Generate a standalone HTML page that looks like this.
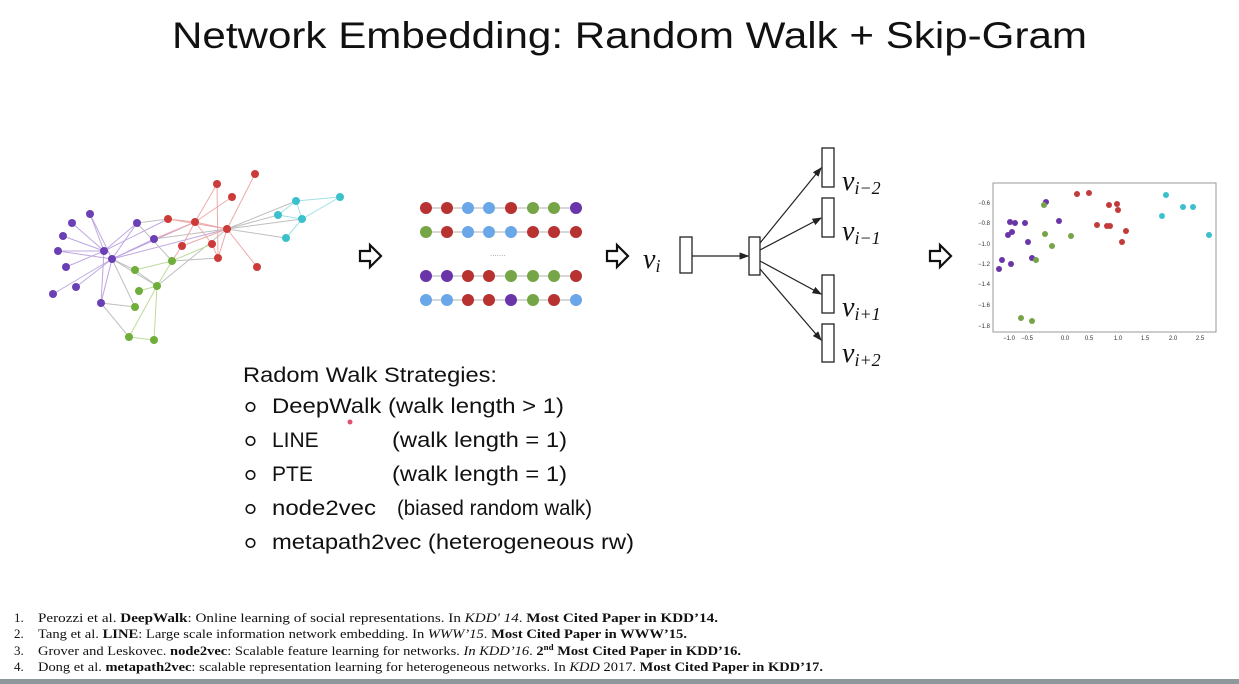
<!DOCTYPE html>
<html><head><meta charset="utf-8"><style>
html,body{margin:0;padding:0;background:#fff;width:1239px;height:684px;overflow:hidden}
svg{display:block}
.s{font-family:"Liberation Sans",Arial,sans-serif;fill:#111}
.r{font-family:"Liberation Serif",serif;font-size:13px;fill:#111}
.m{font-family:"Liberation Serif",serif;font-style:italic;fill:#111}
.t{font-family:"Liberation Sans",sans-serif;font-size:6px;fill:#333}
</style></head><body>
<svg width="1239" height="684" xmlns="http://www.w3.org/2000/svg">
<rect width="1239" height="684" fill="#fff"/>
<text class="s" x="172" y="48" font-size="37" textLength="915" lengthAdjust="spacingAndGlyphs">Network Embedding: Random Walk + Skip-Gram</text>

<!-- network -->
<g stroke-width="1" opacity="0.75">
<g stroke="#a98ad6">
<line x1="104" y1="251" x2="90" y2="214"/><line x1="104" y1="251" x2="72" y2="223"/><line x1="104" y1="251" x2="63" y2="236"/><line x1="104" y1="251" x2="58" y2="251"/><line x1="104" y1="251" x2="66" y2="267"/><line x1="112" y1="259" x2="53" y2="294"/><line x1="112" y1="259" x2="76" y2="287"/><line x1="112" y1="259" x2="101" y2="303"/><line x1="104" y1="251" x2="137" y2="223"/><line x1="112" y1="259" x2="154" y2="239"/><line x1="112" y1="259" x2="90" y2="214"/><line x1="112" y1="259" x2="58" y2="251"/><line x1="112" y1="259" x2="137" y2="223"/><line x1="104" y1="251" x2="168" y2="219"/><line x1="112" y1="259" x2="195" y2="222"/><line x1="112" y1="259" x2="227" y2="229"/><line x1="104" y1="251" x2="101" y2="303"/>
</g>
<g stroke="#aaa"><line x1="112" y1="259" x2="135" y2="270"/><line x1="112" y1="259" x2="157" y2="286"/><line x1="112" y1="259" x2="135" y2="307"/><line x1="101" y1="303" x2="135" y2="307"/><line x1="101" y1="303" x2="129" y2="337"/><line x1="137" y1="223" x2="168" y2="219"/><line x1="154" y1="239" x2="227" y2="229"/><line x1="137" y1="223" x2="172" y2="261"/><line x1="172" y1="261" x2="218" y2="258"/><line x1="157" y1="286" x2="227" y2="229"/><line x1="227" y1="229" x2="296" y2="201"/><line x1="227" y1="229" x2="278" y2="215"/><line x1="227" y1="229" x2="286" y2="238"/><line x1="227" y1="229" x2="302" y2="219"/><line x1="135" y1="270" x2="157" y2="286"/></g>
<g stroke="#a8cf7a"><line x1="172" y1="261" x2="135" y2="270"/><line x1="172" y1="261" x2="157" y2="286"/><line x1="157" y1="286" x2="139" y2="291"/><line x1="157" y1="286" x2="154" y2="340"/><line x1="157" y1="286" x2="129" y2="337"/><line x1="129" y1="337" x2="154" y2="340"/><line x1="172" y1="261" x2="212" y2="244"/></g>
<g stroke="#e88e8e"><line x1="168" y1="219" x2="227" y2="229"/><line x1="195" y1="222" x2="227" y2="229"/><line x1="195" y1="222" x2="217" y2="184"/><line x1="195" y1="222" x2="232" y2="197"/><line x1="217" y1="184" x2="218" y2="258"/><line x1="227" y1="229" x2="255" y2="174"/><line x1="227" y1="229" x2="257" y2="267"/><line x1="195" y1="222" x2="182" y2="246"/><line x1="195" y1="222" x2="212" y2="244"/><line x1="227" y1="229" x2="218" y2="258"/><line x1="182" y1="246" x2="227" y2="229"/><line x1="212" y1="244" x2="218" y2="258"/><line x1="168" y1="219" x2="195" y2="222"/><line x1="172" y1="261" x2="182" y2="246"/><line x1="154" y1="239" x2="195" y2="222"/></g>
<g stroke="#7fd6df"><line x1="296" y1="201" x2="340" y2="197"/><line x1="296" y1="201" x2="278" y2="215"/><line x1="296" y1="201" x2="302" y2="219"/><line x1="302" y1="219" x2="286" y2="238"/><line x1="302" y1="219" x2="340" y2="197"/><line x1="278" y1="215" x2="302" y2="219"/></g>
</g>
<g fill="#6b3fb5"><circle cx="90" cy="214" r="4"/><circle cx="72" cy="223" r="4"/><circle cx="63" cy="236" r="4"/><circle cx="58" cy="251" r="4"/><circle cx="66" cy="267" r="4"/><circle cx="53" cy="294" r="4"/><circle cx="76" cy="287" r="4"/><circle cx="101" cy="303" r="4"/><circle cx="104" cy="251" r="4"/><circle cx="112" cy="259" r="4"/><circle cx="137" cy="223" r="4"/><circle cx="154" cy="239" r="4"/></g>
<g fill="#6fae3a"><circle cx="135" cy="270" r="4"/><circle cx="139" cy="291" r="4"/><circle cx="135" cy="307" r="4"/><circle cx="129" cy="337" r="4"/><circle cx="154" cy="340" r="4"/><circle cx="157" cy="286" r="4"/><circle cx="172" cy="261" r="4"/></g>
<g fill="#cc3a3a"><circle cx="168" cy="219" r="4"/><circle cx="195" cy="222" r="4"/><circle cx="182" cy="246" r="4"/><circle cx="212" cy="244" r="4"/><circle cx="218" cy="258" r="4"/><circle cx="227" cy="229" r="4"/><circle cx="217" cy="184" r="4"/><circle cx="232" cy="197" r="4"/><circle cx="255" cy="174" r="4"/><circle cx="257" cy="267" r="4"/></g>
<g fill="#3cc0cc"><circle cx="296" cy="201" r="4"/><circle cx="278" cy="215" r="4"/><circle cx="302" cy="219" r="4"/><circle cx="286" cy="238" r="4"/><circle cx="340" cy="197" r="4"/></g>

<!-- hollow arrows -->
<g fill="#fff" stroke="#111" stroke-width="2.2" stroke-linejoin="miter">
<path d="M360 251h10v-6l11 11-11 11v-6h-10z"/>
<path d="M607 251h10v-6l11 11-11 11v-6h-10z"/>
<path d="M930 251h10v-6l11 11-11 11v-6h-10z"/>
</g>

<!-- walks -->
<g stroke="#ccc" stroke-width="1.5"><line x1="426" y1="208" x2="576" y2="208"/><line x1="426" y1="232" x2="576" y2="232"/><line x1="426" y1="276" x2="576" y2="276"/><line x1="426" y1="300" x2="576" y2="300"/></g>
<g>
<circle cx="426" cy="208" r="6" fill="#b83232"/><circle cx="447" cy="208" r="6" fill="#b83232"/><circle cx="468" cy="208" r="6" fill="#6aa7e8"/><circle cx="489" cy="208" r="6" fill="#6aa7e8"/><circle cx="511" cy="208" r="6" fill="#b83232"/><circle cx="533" cy="208" r="6" fill="#75a547"/><circle cx="554" cy="208" r="6" fill="#75a547"/><circle cx="576" cy="208" r="6" fill="#6a35a8"/>
<circle cx="426" cy="232" r="6" fill="#75a547"/><circle cx="447" cy="232" r="6" fill="#b83232"/><circle cx="468" cy="232" r="6" fill="#6aa7e8"/><circle cx="489" cy="232" r="6" fill="#6aa7e8"/><circle cx="511" cy="232" r="6" fill="#6aa7e8"/><circle cx="533" cy="232" r="6" fill="#b83232"/><circle cx="554" cy="232" r="6" fill="#b83232"/><circle cx="576" cy="232" r="6" fill="#b83232"/>
<circle cx="426" cy="276" r="6" fill="#6a35a8"/><circle cx="447" cy="276" r="6" fill="#6a35a8"/><circle cx="468" cy="276" r="6" fill="#b83232"/><circle cx="489" cy="276" r="6" fill="#b83232"/><circle cx="511" cy="276" r="6" fill="#75a547"/><circle cx="533" cy="276" r="6" fill="#75a547"/><circle cx="554" cy="276" r="6" fill="#75a547"/><circle cx="576" cy="276" r="6" fill="#b83232"/>
<circle cx="426" cy="300" r="6" fill="#6aa7e8"/><circle cx="447" cy="300" r="6" fill="#6aa7e8"/><circle cx="468" cy="300" r="6" fill="#b83232"/><circle cx="489" cy="300" r="6" fill="#b83232"/><circle cx="511" cy="300" r="6" fill="#6a35a8"/><circle cx="533" cy="300" r="6" fill="#75a547"/><circle cx="554" cy="300" r="6" fill="#b83232"/><circle cx="576" cy="300" r="6" fill="#6aa7e8"/>
</g>
<text x="490" y="256" font-size="8" fill="#999" font-family="Liberation Sans">.......</text>

<!-- skip-gram -->
<g fill="#fff" stroke="#222" stroke-width="1.3">
<rect x="680" y="237" width="12" height="36"/><rect x="749" y="237" width="11" height="38"/>
<rect x="822" y="148" width="12" height="39"/><rect x="822" y="198" width="12" height="39"/><rect x="822" y="275" width="12" height="38"/><rect x="822" y="324" width="12" height="38"/>
</g>
<defs><marker id="a" markerWidth="8" markerHeight="8" refX="7" refY="4" orient="auto"><path d="M0 1L8 4L0 7z" fill="#222"/></marker></defs>
<g stroke="#222" stroke-width="1.2" marker-end="url(#a)">
<line x1="692" y1="256" x2="748" y2="256"/>
<line x1="760" y1="243" x2="821" y2="168"/><line x1="760" y1="250" x2="821" y2="218"/><line x1="760" y1="261" x2="821" y2="294"/><line x1="760" y1="269" x2="821" y2="340"/>
</g>
<text class="m" x="643" y="268" font-size="28">v<tspan font-size="18" dy="4">i</tspan></text>
<text class="m" x="842" y="190" font-size="28">v<tspan font-size="18" dy="4">i−2</tspan></text>
<text class="m" x="842" y="240" font-size="28">v<tspan font-size="18" dy="4">i−1</tspan></text>
<text class="m" x="842" y="316" font-size="28">v<tspan font-size="18" dy="4">i+1</tspan></text>
<text class="m" x="842" y="362" font-size="28">v<tspan font-size="18" dy="4">i+2</tspan></text>

<!-- scatter -->
<rect x="993" y="183" width="223" height="149" fill="#fff" stroke="#999" stroke-width="1"/>
<g class="t" text-anchor="end">
<text x="990" y="205">−0.6</text><text x="990" y="225">−0.8</text><text x="990" y="246">−1.0</text><text x="990" y="266">−1.2</text><text x="990" y="286">−1.4</text><text x="990" y="307">−1.6</text><text x="990" y="328">−1.8</text>
</g>
<g class="t" text-anchor="middle">
<text x="1009" y="340">−1.0</text><text x="1027" y="340">−0.5</text><text x="1065" y="340">0.0</text><text x="1089" y="340">0.5</text><text x="1118" y="340">1.0</text><text x="1145" y="340">1.5</text><text x="1173" y="340">2.0</text><text x="1200" y="340">2.5</text>
</g>
<g fill="#6a35a8"><circle cx="1046" cy="202" r="3"/><circle cx="1010" cy="222" r="3"/><circle cx="1015" cy="223" r="3"/><circle cx="1025" cy="223" r="3"/><circle cx="1059" cy="221" r="3"/><circle cx="1012" cy="232" r="3"/><circle cx="1008" cy="235" r="3"/><circle cx="1028" cy="242" r="3"/><circle cx="1032" cy="258" r="3"/><circle cx="1002" cy="260" r="3"/><circle cx="1011" cy="264" r="3"/><circle cx="999" cy="269" r="3"/></g>
<g fill="#75a547"><circle cx="1044" cy="205" r="3"/><circle cx="1045" cy="234" r="3"/><circle cx="1071" cy="236" r="3"/><circle cx="1052" cy="246" r="3"/><circle cx="1036" cy="260" r="3"/><circle cx="1021" cy="318" r="3"/><circle cx="1032" cy="321" r="3"/></g>
<g fill="#c23a3a"><circle cx="1077" cy="194" r="3"/><circle cx="1089" cy="193" r="3"/><circle cx="1109" cy="205" r="3"/><circle cx="1117" cy="204" r="3"/><circle cx="1118" cy="210" r="3"/><circle cx="1097" cy="225" r="3"/><circle cx="1107" cy="226" r="3"/><circle cx="1110" cy="226" r="3"/><circle cx="1126" cy="231" r="3"/><circle cx="1122" cy="242" r="3"/></g>
<g fill="#3cc0cc"><circle cx="1166" cy="195" r="3"/><circle cx="1162" cy="216" r="3"/><circle cx="1183" cy="207" r="3"/><circle cx="1193" cy="207" r="3"/><circle cx="1209" cy="235" r="3"/></g>

<!-- strategies -->
<g fill="none" stroke="#111" stroke-width="1.6">
<circle cx="250.5" cy="407" r="4.3"/><circle cx="250.5" cy="441" r="4.3"/><circle cx="250.5" cy="475" r="4.3"/><circle cx="250.5" cy="509" r="4.3"/><circle cx="250.5" cy="543" r="4.3"/>
</g>
<g class="s" font-size="21">
<text x="243" y="382" textLength="254" lengthAdjust="spacingAndGlyphs">Radom Walk Strategies:</text>
<text x="272" y="413" textLength="292" lengthAdjust="spacingAndGlyphs">DeepWalk (walk length &gt; 1)</text>
<text x="272" y="447">LINE</text><text x="392" y="447" textLength="175" lengthAdjust="spacingAndGlyphs">(walk length = 1)</text>
<text x="272" y="481">PTE</text><text x="392" y="481" textLength="175" lengthAdjust="spacingAndGlyphs">(walk length = 1)</text>
<text x="272" y="515" textLength="104" lengthAdjust="spacingAndGlyphs">node2vec</text><text x="397" y="515" textLength="195" lengthAdjust="spacingAndGlyphs">(biased random walk)</text>
<text x="272" y="549" textLength="362" lengthAdjust="spacingAndGlyphs">metapath2vec (heterogeneous rw)</text>
</g>
<circle cx="350" cy="422" r="2.5" fill="#e05070"/>

<!-- refs -->
<g class="r">
<text x="14" y="622">1.</text><text x="38" y="622" textLength="680" lengthAdjust="spacingAndGlyphs">Perozzi et al. <tspan font-weight="bold">DeepWalk</tspan>: Online learning of social representations. In <tspan font-style="italic">KDD' 14</tspan>. <tspan font-weight="bold">Most Cited Paper in KDD’14.</tspan></text>
<text x="14" y="638">2.</text><text x="38" y="638" textLength="649" lengthAdjust="spacingAndGlyphs">Tang et al. <tspan font-weight="bold">LINE</tspan>: Large scale information network embedding. In <tspan font-style="italic">WWW’15</tspan>. <tspan font-weight="bold">Most  Cited Paper in WWW’15.</tspan></text>
<text x="14" y="655">3.</text><text x="38" y="655" textLength="703" lengthAdjust="spacingAndGlyphs">Grover and Leskovec. <tspan font-weight="bold">node2vec</tspan>: Scalable feature learning for networks. <tspan font-style="italic">In KDD’16</tspan>. <tspan font-weight="bold">2<tspan font-size="8" dy="-5">nd</tspan><tspan dy="5"> Most Cited Paper in KDD’16.</tspan></tspan></text>
<text x="14" y="671">4.</text><text x="38" y="671" textLength="785" lengthAdjust="spacingAndGlyphs">Dong et al. <tspan font-weight="bold">metapath2vec</tspan>: scalable representation learning for heterogeneous networks. In <tspan font-style="italic">KDD</tspan> 2017. <tspan font-weight="bold">Most Cited Paper in KDD’17.</tspan></text>
</g>
<rect x="0" y="679" width="1239" height="5" fill="#8e979c"/>
</svg>
</body></html>
